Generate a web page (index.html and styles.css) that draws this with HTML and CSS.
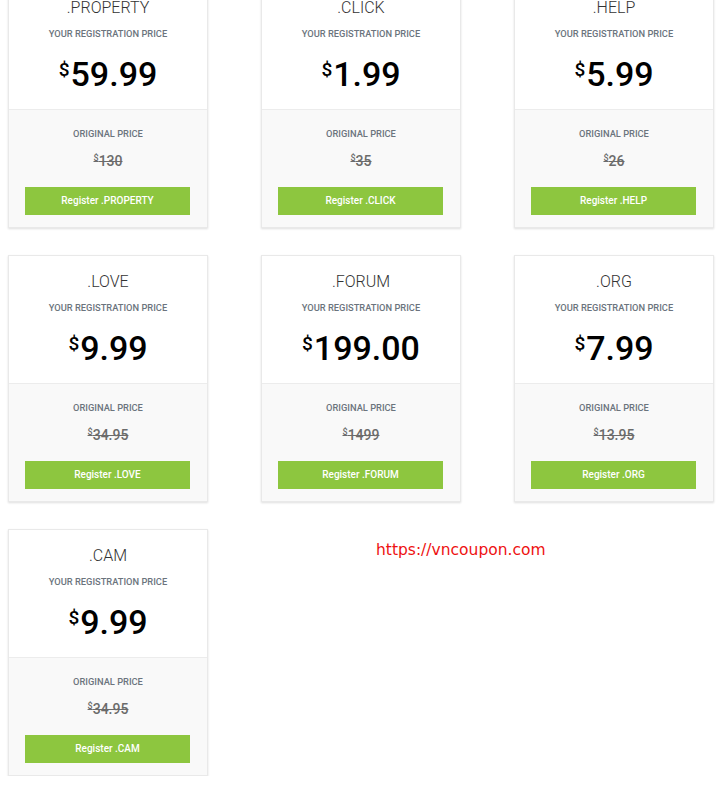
FILE: index.html
```html
<!DOCTYPE html>
<html>
<head>
<meta charset="utf-8">
<link rel="stylesheet" href="styles.css">
</head>
<body>
<div class="grid">
  <div class="card">
    <div class="top"><div class="tld">.PROPERTY</div><div class="label">YOUR REGISTRATION PRICE</div><div class="price"><span class="cur">$</span>59.99</div></div>
    <div class="bottom"><div class="label">ORIGINAL PRICE</div><div class="old"><span class="ocur">$</span>130</div><a class="btn">Register .PROPERTY</a></div>
  </div>
  <div class="card">
    <div class="top"><div class="tld">.CLICK</div><div class="label">YOUR REGISTRATION PRICE</div><div class="price"><span class="cur">$</span>1.99</div></div>
    <div class="bottom"><div class="label">ORIGINAL PRICE</div><div class="old"><span class="ocur">$</span>35</div><a class="btn">Register .CLICK</a></div>
  </div>
  <div class="card">
    <div class="top"><div class="tld">.HELP</div><div class="label">YOUR REGISTRATION PRICE</div><div class="price"><span class="cur">$</span>5.99</div></div>
    <div class="bottom"><div class="label">ORIGINAL PRICE</div><div class="old"><span class="ocur">$</span>26</div><a class="btn">Register .HELP</a></div>
  </div>
  <div class="card">
    <div class="top"><div class="tld">.LOVE</div><div class="label">YOUR REGISTRATION PRICE</div><div class="price"><span class="cur">$</span>9.99</div></div>
    <div class="bottom"><div class="label">ORIGINAL PRICE</div><div class="old"><span class="ocur">$</span>34.95</div><a class="btn">Register .LOVE</a></div>
  </div>
  <div class="card">
    <div class="top"><div class="tld">.FORUM</div><div class="label">YOUR REGISTRATION PRICE</div><div class="price"><span class="cur">$</span>199.00</div></div>
    <div class="bottom"><div class="label">ORIGINAL PRICE</div><div class="old"><span class="ocur">$</span>1499</div><a class="btn">Register .FORUM</a></div>
  </div>
  <div class="card">
    <div class="top"><div class="tld">.ORG</div><div class="label">YOUR REGISTRATION PRICE</div><div class="price"><span class="cur">$</span>7.99</div></div>
    <div class="bottom"><div class="label">ORIGINAL PRICE</div><div class="old"><span class="ocur">$</span>13.95</div><a class="btn">Register .ORG</a></div>
  </div>
  <div class="card">
    <div class="top"><div class="tld">.CAM</div><div class="label">YOUR REGISTRATION PRICE</div><div class="price"><span class="cur">$</span>9.99</div></div>
    <div class="bottom"><div class="label">ORIGINAL PRICE</div><div class="old"><span class="ocur">$</span>34.95</div><a class="btn">Register .CAM</a></div>
  </div>
  <div class="watermark">https://vncoupon.com</div>
</div>
</body>
</html>
```
FILE: styles.css
```css
html, body {
  margin: 0;
  padding: 0;
  background: #ffffff;
  font-family: Roboto, "Liberation Sans", sans-serif;
}
.grid {
  display: grid;
  grid-template-columns: repeat(3, 200px);
  column-gap: 53px;
  row-gap: 27px;
  margin: -19px 0 0 8px;
}
.card {
  box-sizing: border-box;
  height: 247px;
  border: 1px solid #e9e9e9;
  box-shadow: 0 1px 2px rgba(0, 0, 0, 0.13);
  background: #ffffff;
  display: flex;
  flex-direction: column;
  text-align: center;
}
.top {
  box-sizing: border-box;
  height: 128px;
  padding-top: 16px;
  border-bottom: 1px solid #ececec;
}
.tld {
  font-size: 16px;
  font-weight: 300;
  line-height: 20px;
  color: #333333;
}
.label {
  font-size: 9.3px;
  font-weight: 500;
  line-height: 12px;
  color: #6b747d;
}
.top .label {
  margin-top: 10px;
}
.price {
  margin-top: 14px;
  font-size: 34px;
  font-weight: 500;
  line-height: 40px;
  color: #000000;
}
.cur {
  display: inline-block;
  vertical-align: top;
  font-size: 19px;
  line-height: 18px;
  margin-top: 7px;
  margin-right: 1px;
}
.bottom {
  flex: 1;
  background: #f9f9f9;
  padding: 18px 16px 0;
  display: flex;
  flex-direction: column;
}
.old {
  margin-top: 8px;
  font-size: 14px;
  font-weight: 500;
  line-height: 20px;
  color: #6b6b6b;
  text-decoration: line-through;
}
.ocur {
  font-size: 9px;
  vertical-align: 5px;
}
.btn {
  margin-top: 16px;
  height: 28px;
  line-height: 28px;
  background: #8dc63f;
  color: #ffffff;
  font-size: 10px;
  font-weight: 500;
  margin-right: 1px;
}
.watermark {
  grid-column: 2 / 4;
  padding: 12px 0 0 115px;
  font-family: "DejaVu Sans", sans-serif;
  font-size: 15.5px;
  line-height: 18px;
  color: #ee1111;
}
```
